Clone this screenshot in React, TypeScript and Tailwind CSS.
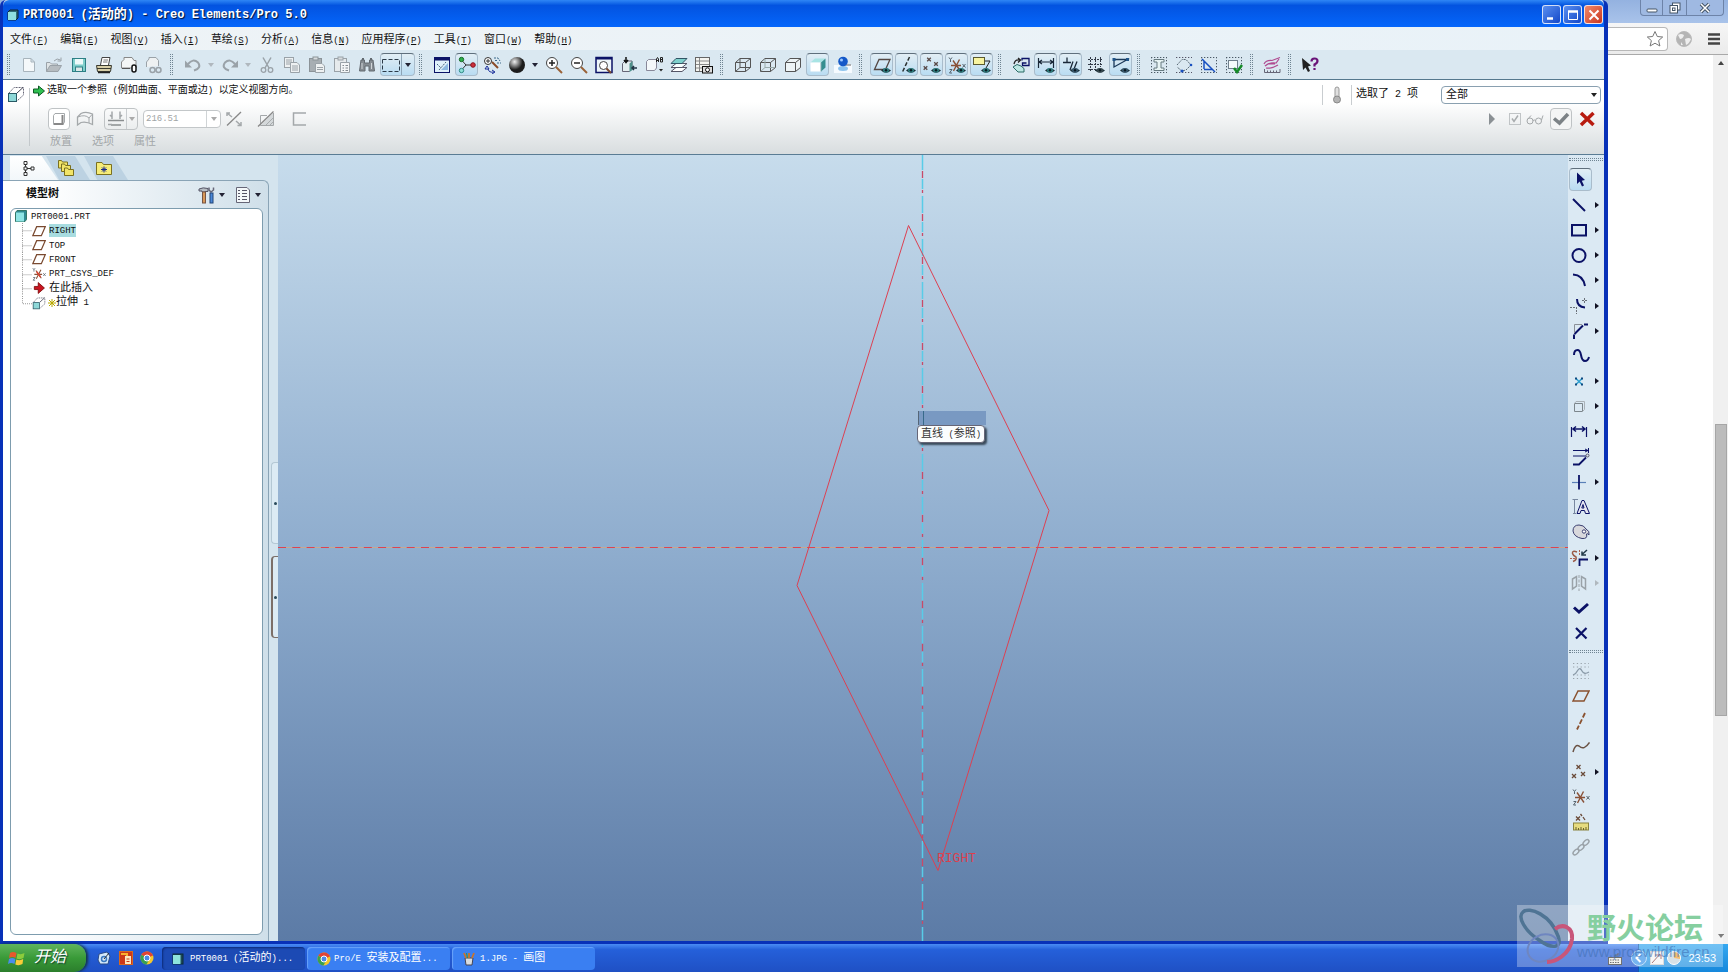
import React from "react";

type Kids = { children?: React.ReactNode };

const MONO = "font-['Liberation_Mono','Noto_Sans_CJK_SC',monospace]";

/* Sets Latin runs in a narrow monospace next to full-width Han glyphs. */
function T({ s, latin = "text-[9px]", u }: { s: string; latin?: string; u?: string }) {
  const parts = s.match(/[\x20-\x7e]+|[^\x20-\x7e]+/g) ?? [];
  return (
    <span className="whitespace-pre">
      {parts.map((p, i) =>
        /^[\x20-\x7e]/.test(p) ? (
          <span key={i} className={latin}>{p}</span>
        ) : (
          <span key={i}>{p}</span>
        )
      )}
      {u && (
        <span className={latin}>
          (<span className="underline underline-offset-1">{u}</span>)
        </span>
      )}
    </span>
  );
}

function Ic({ children, className = "size-[18px]", box = "0 0 18 18" }: Kids & { className?: string; box?: string }) {
  return (
    <svg viewBox={box} className={`${className} shrink-0`} fill="none" stroke="#333" strokeWidth="1" aria-hidden="true">
      {children}
    </svg>
  );
}

const Eye = ({ c = "#2f7f7f" }: { c?: string }) => (
  <g stroke="none">
    <path d="M8 14.5Q12.500 10 18 14.500Q13 19 8 14.500Z" fill="#1b2f38" />
    <ellipse cx="13" cy="14.300" rx="3" ry="2.300" fill={c} />
    <circle cx="13" cy="14.300" r="1.200" fill="#0a1a22" />
  </g>
);

const X = ({ x, y, r = 1.8, c = "#5a4a48" }: { x: number; y: number; r?: number; c?: string }) => (
  <path d={`M${x - r} ${y - r}L${x + r} ${y + r}M${x + r} ${y - r}L${x - r} ${y + r}`} stroke={c} strokeWidth="1.3" />
);

const Csys = () => (
  <>
    <path d="M3 9.500H13M5 4.500L12 14.500M11.500 3.500L5.500 15" stroke="#8a5238" strokeWidth="1.400" />
    <path d="M1 1.500L2.500 3.500L4 1.500M2.500 3.500V6M1.500 13.500H4L1.500 17H4M14.500 8L17.500 11.500M17.500 8L14.500 11.500" stroke="#56626c" />
  </>
);

const DotFrame = ({ c = "#4b5a66" }: { c?: string }) => (
  <path d="M1 1.500H17M1 16.500H17M1.500 1V17M16.500 1V17" stroke={c} strokeDasharray="1.300 1.700" />
);

const navy = "#0b1266";
const gray = "#9aa2a8";

const icons: Record<string, React.ReactNode> = {
  new: <path d="M3.500 2.500H11L14.500 6V15.500H3.500ZM11 2.500V6H14.500" fill="#f4f8fa" stroke="#a8b4bc" />,
  open: <><path d="M1.500 15.500V6.500H5L6.500 8H12.500V9.500" fill="#dfe4e6" stroke={gray} /><path d="M1.500 15.500L5 9.500H16.500L13 15.500Z" fill="#b6bcc0" stroke={gray} /><path d="M9 5Q12 1.500 15.500 4M16 1.500V5H12.500" stroke={gray} /></>,
  save: <><rect x="2.500" y="2.500" width="13" height="13" fill="#7fcfcb" stroke="#2e7f85" /><rect x="5" y="3" width="8" height="5.500" fill="#eefafa" stroke="none" /><rect x="5.500" y="11" width="7" height="4.500" fill="#dce8e8" stroke="#2e7f85" /></>,
  print: <><path d="M5.500 9L7 1.500H15L13.500 9" fill="#fff" stroke="#444" /><path d="M8.500 4H13M8 6H12.500" stroke="#777" /><path d="M1.500 9.500H16.500L15.500 15.500H2.500Z" fill="#d8cfa8" stroke="#3a3a30" /><path d="M2 12.500H16" stroke="#3a3a30" /><path d="M3 16.500H15" stroke="#222" strokeWidth="1.500" /></>,
  preview: <><path d="M1.500 12V6L4 3.500V1.500H12L14 4.500H16V12Z" fill="#f4f6f6" stroke="#888" /><path d="M2 12.500H10" stroke="#555" /><rect x="12" y="9" width="4" height="7" rx="2" fill="#fff" stroke="#111" strokeWidth="1.500" /></>,
  link: <><path d="M1.500 11V6L4 3V1.500H11L13.500 4.500V10" fill="#eef1f2" stroke={gray} /><circle cx="7.500" cy="14" r="2.500" stroke={gray} strokeWidth="1.500" /><circle cx="13.500" cy="14" r="2.500" stroke={gray} strokeWidth="1.500" /></>,
  undo: <><path d="M4 8Q9 2 14 6.500Q18 12 10 14.500" stroke={gray} strokeWidth="2" /><path d="M1 4.500V11.500H8Z" fill={gray} stroke="none" /></>,
  redo: <><path d="M14 8Q9 2 4 6.500Q0 12 8 14.500" stroke={gray} strokeWidth="2" /><path d="M17 4.500V11.500H10Z" fill={gray} stroke="none" /></>,
  cut: <><path d="M5 1.500L11 12M13 1.500L7 12" stroke={gray} strokeWidth="1.500" /><circle cx="5.500" cy="14" r="2.300" stroke={gray} strokeWidth="1.300" /><circle cx="12.500" cy="14" r="2.300" stroke={gray} strokeWidth="1.300" /></>,
  copy: <><rect x="1.500" y="1.500" width="9" height="10" fill="#eef1f2" stroke={gray} /><path d="M3 4H9M3 6H9M3 8H9" stroke={gray} /><path d="M7.500 6.500H14L16.500 9V16.500H7.500Z" fill="#eef1f2" stroke={gray} /><path d="M9 10H15M9 12H15M9 14H15" stroke={gray} /></>,
  paste: <><rect x="1.500" y="2.500" width="12" height="13" fill="#a7aeb3" stroke="#8b9398" /><rect x="5" y="1" width="5" height="3" fill="#d8dcde" stroke="#8b9398" /><path d="M7.500 7.500H14L16.500 10V16.500H7.500Z" fill="#eef1f2" stroke={gray} /><path d="M9 11.500H15M9 13.500H15" stroke={gray} /></>,
  pasteSpecial: <><rect x="1.500" y="2.500" width="12" height="13" fill="#e6eaec" stroke={gray} /><rect x="5" y="1" width="5" height="3" fill="#d8dcde" stroke={gray} /><path d="M7.500 6.500H16.500V16.500H7.500Z" fill="#f4f6f7" stroke={gray} /><path d="M9.500 9.500H11M12.500 9.500H15M9.500 12H11M12.500 12H15M9.500 14.500H11M12.500 14.500H15" stroke="#838a90" /></>,
  find: <><path d="M3 4L1.500 15H7V10H11V15H16.500L15 4H11.500V7H6.500V4Z" fill="#858c92" stroke="#636a70" /><path d="M4 3H6M12 3H14" strokeWidth="2" stroke="#636a70" /><path d="M4 7V13M13.500 7V13" stroke="#d0d5d8" /></>,
  marquee: <rect x="0.500" y="3.500" width="17" height="12" strokeDasharray="4 2" stroke="#2b3a48" />,
  repaint: <><rect x="1.500" y="1.500" width="15" height="15" fill="#dff0fa" stroke={navy} /><path d="M1 3H17" stroke={navy} strokeWidth="3" /><path d="M4 8L8 12M6 14L13 6" stroke="#48647c" strokeDasharray="2 1" /><path d="M8 14L15 7V14Z" fill="#8cb8e0" stroke="none" /></>,
  spin: <><path d="M3.500 4L8 9L3.500 14M8 9H15" stroke="#333" /><circle cx="3.500" cy="3.500" r="2.200" fill="#2fae4a" stroke="#176b28" /><circle cx="3.500" cy="14.500" r="2.200" fill="#8fe0d8" stroke="#2f8a86" /><circle cx="15" cy="9" r="2.300" fill="#cc2f3c" stroke="#8a1522" /></>,
  orient: <><circle cx="5" cy="5" r="3.500" fill="#fff" stroke="#333" /><path d="M3 5H7M5 3V7" stroke="#333" /><path d="M9 6L15 12" stroke="#8a4a28" strokeWidth="2" /><path d="M11 2H15L17 5M12 4.500H15M14 7H18" stroke="#3a6888" strokeDasharray="2 1" /><path d="M4 10L2 13H6ZM5 13Q6 17 11 16M9 14L12 16L9 18" stroke="#1b2f9a" /></>,
  sphere: <><defs><radialGradient id="ball" cx="35%" cy="30%"><stop offset="0" stopColor="#f0f0f0" /><stop offset=".5" stopColor="#888" /><stop offset="1" stopColor="#1c1c1c" /></radialGradient></defs><circle cx="9" cy="9" r="8" fill="url(#ball)" stroke="none" /></>,
  zoomIn: <><circle cx="7" cy="7" r="5.500" fill="#fff" stroke="#444" /><path d="M4 7H10M7 4V10" stroke="#222" strokeWidth="1.500" /><path d="M11 11L17 17" stroke="#9a6238" strokeWidth="2" /></>,
  zoomOut: <><circle cx="7" cy="7" r="5.500" fill="#fff" stroke="#444" /><path d="M4 7H10" stroke="#222" strokeWidth="1.500" /><path d="M11 11L17 17" stroke="#9a6238" strokeWidth="2" /></>,
  refit: <><rect x="1" y="1.500" width="16" height="15" fill="#eef6fa" stroke={navy} strokeWidth="1.500" /><path d="M1 2.500H17" stroke={navy} strokeWidth="2" /><circle cx="8.500" cy="9.500" r="4" fill="#fff" stroke="#444" /><path d="M11.500 12.500L16 17" stroke="#7a4a30" strokeWidth="2" /></>,
  reorient: <><path d="M2.500 7.500L5 5H12V13L9.500 15.500H2.500Z" fill="#e4eef0" stroke="#667" /><path d="M6 1V6M4 4L6 6.500L8 4" stroke="#111" strokeWidth="1.500" /><path d="M9.500 7.500L12.500 5V14L9.500 16Z" fill="#4f8f8a" stroke="none" /><path d="M17 12H12M14 10L12 12L14 14" stroke="#234" strokeWidth="1.500" /></>,
  saved: <><path d="M1.500 5.500L3.500 3.500H11.500V12L9.500 14.500H1.500Z" fill="#f4f8fa" stroke="#889" /><path d="M11.500 6V3L12.500 1.500L13.500 3V6M11.500 4.500H13.500M15.500 1.500V6H17.500V1.500ZM15.500 3.500H17.500" stroke="#222" /><path d="M14 13H18L16 15.500Z" fill="#222" stroke="none" /></>,
  layers: <><path d="M1 15.500L6 11.500H17L12 15.500Z" fill="#fff" stroke="#556" /><path d="M1 11.500L6 7.500H17L12 11.500Z" fill="#f8ffff" stroke="#556" /><path d="M1 7.500L6 2.500H17L12 7.500Z" fill="#7fd0cc" stroke="#356" /></>,
  viewMgr: <><rect x="0.500" y="1.500" width="14" height="14" fill="#f4f4f0" stroke="#666" /><path d="M1 5H14M1 8.500H14M1 12H14M4.500 2V15" stroke="#888" /><rect x="7.500" y="10.500" width="10" height="6.500" fill="#ddd" stroke="#111" /><circle cx="12.500" cy="13.800" r="2" fill="#fff" stroke="#111" /></>,
  wire: <path d="M1.500 6.500H11.500V15.500H1.500ZM6 2.500H16.500V11.500H6ZM1.500 6.500L6 2.500M11.500 6.500L16.500 2.500M11.500 15.500L16.500 11.500M1.500 15.500L6 11.500" stroke="#555" />,
  hidden: <><path d="M1.500 6.500H11.500V15.500H1.500ZM1.500 6.500L6 2.500H16.500V11.500L11.500 15.500M11.500 6.500L16.500 2.500" stroke="#555" /><path d="M6 3V11.500H16M6 11.500L2 15" stroke="#9aa" /></>,
  noHidden: <path d="M1.500 6.500H11.500V15.500H1.500ZM1.500 6.500L6 2.500H16.500V11.500L11.500 15.500M11.500 6.500L16.500 2.500" stroke="#555" fill="#eef4f6" />,
  shade: <><path d="M1.500 6.500L6 2.500H16.500L12 6.500Z" fill="#a8e4e4" stroke="none" /><path d="M1.500 6.500H12V15.500H1.500Z" fill="#fff" stroke="none" /><path d="M12 6.500L16.500 2.500V11.500L12 15.500Z" fill="#358f90" stroke="none" /><path d="M12 6.500V15.500" stroke="#80a8b0" /></>,
  realism: <><rect x="0" y="9" width="18" height="8" fill="#f6fbff" stroke="none" /><path d="M9 9H17" stroke="#999" strokeWidth="1.500" /><ellipse cx="9" cy="12.500" rx="5" ry="2.500" fill="#8ec4ee" stroke="none" /><circle cx="9" cy="5.500" r="4.800" fill="#1458c8" stroke="none" /><circle cx="7.500" cy="4" r="1.500" fill="#9cc8ff" stroke="none" /></>,
  planeEye: <><path d="M1.500 13.500L6 3.500H17L12.500 13.500Z" stroke="#544844" strokeWidth="1.300" /><Eye /></>,
  axisEye: <><path d="M11.500 1L4 17" stroke="#2a3030" strokeWidth="1.500" strokeDasharray="4 2" /><Eye /></>,
  pointEye: <><X x={6} y={3.500} /><X x={2.500} y={12} /><X x={13} y={8} /><Eye /></>,
  csysEye: <><Csys /><Eye /></>,
  noteEye: <><rect x="0.500" y="1.500" width="11" height="7" fill="#f8f4a0" stroke="#5a5a30" /><path d="M12 5H17L13 12" stroke="#222" /><Eye /></>,
  ref3d: <><path d="M10 4.500V2.500H17V9.500H10.500V7H14.500" stroke={navy} strokeWidth="1.300" /><path d="M2 8Q3 3 8 4M6 2L8.500 4L6 6.500" stroke="#222" strokeWidth="1.300" /><path d="M1 11L5 8.500L9 10L12 12.500V16H6L3 13Z" fill="#bfe8e4" stroke="#2a6a66" /></>,
  dimEye: <><path d="M1.500 2V12M16.500 2V12M2 6H16M5 4L2 6L5 8M13 4L16 6L13 8" stroke="#1a2838" strokeWidth="1.200" /><Eye /></>,
  constrEye: <><path d="M1 6.500H9M5 1.500V6.500M8 14L11 5.500M12 13L15 5.500" stroke="#1a2838" strokeWidth="1.300" /><Eye c="#3a5a70" /></>,
  gridEye: <><path d="M1 3.500H16M1 8.500H16M1 13.500H9M3.500 1V16M8.500 1V15M13.500 1V11" stroke="#333b48" strokeDasharray="2 1" /><Eye c="#3a4a50" /></>,
  vertEye: <><path d="M1.500 3.500H15.500L2 11V3.500" stroke="#1a3858" strokeWidth="1.300" /><rect x="0.500" y="2" width="3" height="3" fill="#258" stroke="none" /><rect x="14" y="2" width="3" height="3" fill="#258" stroke="none" /><Eye c="#3a5a70" /></>,
  dg1: <><DotFrame /><path d="M4 3.500H14V6H11V12H14V14.500H4V12H7V6H4Z" fill="#e8f4f4" stroke="#667a80" /></>,
  dg2: <><path d="M1 1.500H17M1 16.500H17" stroke="#556" strokeDasharray="1.300 1.700" /><path d="M2 9L7 3.500H11L16 9L11 14L7 15L2 11" stroke="#566672" strokeDasharray="2 1" /><circle cx="7" cy="15" r="1.600" fill="#1850c0" stroke="none" /><circle cx="16" cy="9" r="1.300" fill="#1850c0" stroke="none" /></>,
  dg3: <><DotFrame /><path d="M2 3L15 16M4 13V5M4 13.500H12" stroke="#1850c0" strokeWidth="1.500" /></>,
  dg4: <><DotFrame /><rect x="3.500" y="4.500" width="9" height="8" fill="#f6fbfb" stroke="#70808c" /><path d="M9 12L12 16L17 9" stroke="#158a28" strokeWidth="2.500" /></>,
  analysis: <><path d="M1 8Q3 4 9 4.500L17 1.500M2 10Q6 6 13 7L16 3M3 12Q8 13 15 9M5 8H12" stroke="#b04a90" strokeWidth="1.200" /><path d="M1.500 13V16.500H17V13M4.500 14.500V16M7.500 14.500V16M10.500 14.500V16M13.500 14.500V16" stroke="#667" /></>,
  help: <><path d="M1 2L2 14L4.500 11.500L7 16L9 15L7 10.500L10 9.500Z" fill="#222" stroke="none" /><path d="M10.500 5.500Q10.500 2.500 13.500 2.500Q16.500 2.500 16.500 5Q16.500 7 13.500 8.500V10.500M13.500 12V14" stroke="#6a1478" strokeWidth="2.200" /></>,
};

const side: Record<string, React.ReactNode> = {
  select: <path d="M5 1.500V13L7.700 10.500L10 15.500L12 14.500L9.800 9.800L13 9Z" fill={navy} stroke="none" />,
  line: <path d="M3 3L15 15" stroke={navy} strokeWidth="2" />,
  rect: <rect x="2" y="4" width="14" height="10.500" stroke={navy} strokeWidth="2" />,
  circle: <circle cx="9" cy="9.500" r="6.500" stroke={navy} strokeWidth="2" />,
  arc: <path d="M3 3.500Q13 4 15 15" stroke={navy} strokeWidth="2" />,
  fillet: <><path d="M7 2Q7 10 15 10.500" stroke={navy} strokeWidth="2" /><path d="M0 10.500H7M6.500 10V17M14.500 1V6M12 3.500H17" stroke="#6a7078" strokeDasharray="2 1" /></>,
  chamfer: <><path d="M4 17V12.500M4.500 12L13 3.500M14 2.500H18" stroke={navy} strokeWidth="2" /><path d="M4.500 11V2.500H12" stroke="#8a9098" /></>,
  spline: <path d="M2 8Q2 3 5.500 3Q8 3 9 8Q10 14 13 14Q16 14 17 10" stroke={navy} strokeWidth="2" />,
  point: <><path d="M6 6.500L12 12.500M12 6.500L6 12.500" stroke="#2fa0d0" strokeWidth="1.500" /><path d="M5 5.500h2v2h-2zM11 5.500h2v2h-2zM5 11.500h2v2h-2zM11 11.500h2v2h-2z" fill="#0f4a80" stroke="none" /></>,
  edge: <><path d="M4.500 6.500H12.500V14.500H4.500Z" stroke="#7c868c" /><path d="M4.500 6.500L6 4.500H14.500V12.500L12.500 14.500" stroke="#aab2b8" /></>,
  dim: <><path d="M1.500 4V14M16.500 4V14" stroke={navy} strokeWidth="1.200" /><path d="M3 6H15M6 3.500L3 6L6 8.500M12 3.500L15 6L12 8.500" stroke={navy} strokeWidth="1.500" /></>,
  modify: <><path d="M1 2.500H16M16.500 0V5M13 1L16 2.500L13 4" stroke={navy} /><path d="M1 8H14" stroke={navy} /><circle cx="15.500" cy="7.500" r="1.500" stroke="#556" /><path d="M1 16.500H7L14 9.500" stroke={navy} strokeWidth="1.800" /></>,
  constrain: <><path d="M2 9.500H16" stroke="#5a80b8" strokeWidth="1.200" /><path d="M9 2V16.500" stroke={navy} strokeWidth="1.800" /></>,
  text: <><path d="M5 15.500L10 2.500H12L17.500 15.500H13.500L12.500 12.500H9L8 15.500ZM9.800 10H12L11 6.500Z" fill="#e6e6f2" stroke={navy} /><path d="M2.500 2V15M0.500 1.500H6M1 15.500H4" stroke="#7888a0" /></>,
  palette: <><path d="M1 8Q1 2 7 2Q12 2 14 6Q18 8 17 12Q16 10 14.500 11Q16 16 10 15.500Q2 14 1 8Z" fill="#d8d8dc" stroke="#3a3f70" /><circle cx="12" cy="8.500" r="1.700" fill="#fff" stroke="#3a3f70" /></>,
  trim: <><path d="M7 3Q2 1 2.500 4.500Q3 6.500 6 8Q7 11 3 12.500" stroke="#9a5a48" strokeWidth="1.500" /><path d="M0 9.500H6M9.500 1V7" stroke="#b06050" strokeDasharray="2 1" /><path d="M9.500 17V10.500H18" stroke={navy} strokeWidth="1.800" /><path d="M17 1L12 5.500M12 2.500V6H16" stroke="#223a48" strokeWidth="1.500" /></>,
  mirror: <><path d="M2.500 5L6.500 2.500V12L2.500 15ZM15.500 5L11.500 2.500V12L15.500 15Z" stroke={gray} strokeWidth="1.500" /><path d="M9 1V17" stroke={gray} strokeDasharray="3 1.500" /></>,
  done: <path d="M2 8.500L7 13L16 5" stroke={navy} strokeWidth="3" />,
  quit: <path d="M4 4L14.500 14.500M14.500 4L4 14.500" stroke={navy} strokeWidth="2.200" />,
  sketchG: <><path d="M1 1.500H17M1 5H17M1 13H17M1 16.500H17" stroke="#9aa4ac" strokeDasharray="1.300 2.500" /><path d="M1 13Q4 12 6 8Q8 5 10 9Q12 13 17 10" stroke="#8a9aa8" strokeWidth="1.300" /></>,
  plane: <path d="M1 14L6 4H17L12 14Z" stroke="#8a5230" strokeWidth="1.500" />,
  axis: <path d="M13 1L5 17.500" stroke="#8a5230" strokeWidth="1.800" strokeDasharray="5 2" />,
  curve: <path d="M1 15Q3 7 7 9Q12 14 17.500 5.500" stroke="#6a5244" strokeWidth="1.500" />,
  points: <><X x={8.500} y={4} r={2} c="#6a4a38" /><X x={4} y={13} r={2} c="#6a4a38" /><X x={13} y={11} r={2} c="#6a4a38" /></>,
  csys: <Csys />,
  measure: <><X x={6} y={5.500} r={2} c="#6a4a38" /><path d="M8.500 1L10 3M11 4L13 7" stroke="#6a4a38" strokeWidth="1.300" /><rect x="1.500" y="10" width="15" height="7" fill="#e6dc80" stroke="#8a8440" /><path d="M4 17V14M6.500 17V15M9 17V14M11.500 17V15M14 17V14" stroke="#6a6430" /></>,
  chain: <><ellipse cx="4" cy="14" rx="3.500" ry="2" transform="rotate(-42 4 14)" stroke={gray} strokeWidth="1.500" /><ellipse cx="9" cy="9.500" rx="3.500" ry="2" transform="rotate(-42 9 9.500)" stroke={gray} strokeWidth="1.500" /><ellipse cx="14" cy="4.500" rx="3.500" ry="2" transform="rotate(-42 14 4.500)" stroke={gray} strokeWidth="1.500" /></>,
};

const Grip = ({ slim }: { slim?: boolean }) => (
  <div className={`${slim ? "w-[13px]" : "w-[14px]"} flex shrink-0 self-stretch py-1 pl-1`}>
    <div className="h-full w-[3px] border-x border-dotted border-[#6f8492]" />
  </div>
);
const HGrip = () => <div className="mr-[1px] ml-[1px] h-[3px] shrink-0 border-y border-dotted border-[#6f8492]" />;

const Caret = ({ c = "#223" }: { c?: string }) => (
  <svg viewBox="0 0 6 4" className="h-1 w-[6px]" aria-hidden="true"><path d="M0 0H6L3 4Z" fill={c} /></svg>
);

const PRESSED =
  "rounded-sm border border-[#a9bccb] border-t-[#5f6f7c] bg-linear-to-b from-[#e2eef5] to-[#b9dcf2]";

function Tool({ n, on }: { n: string; on?: boolean }) {
  return (
    <div className="flex w-[25px] shrink-0 justify-center">
      <button aria-label={n} className={`flex size-[23px] items-center justify-center ${on ? PRESSED : ""}`}>
        <Ic>{icons[n]}</Ic>
      </button>
    </div>
  );
}

function Drop({ c, label }: { c?: string; label: string }) {
  return (
    <button aria-label={label} className="flex h-full w-3 shrink-0 items-center justify-center"><Caret c={c} /></button>
  );
}

function SideTool({ n, more, on }: { n: string; more?: string; on?: boolean }) {
  return (
    <div className="flex flex-1 items-center">
      <button aria-label={n} className={`flex size-[23px] items-center justify-center ${on ? PRESSED : ""}`}>
        <Ic>{side[n]}</Ic>
      </button>
      {more && (
        <button aria-label={`${n} +`} className="flex w-4 items-center justify-center">
          <svg viewBox="0 0 4 6" className="h-[6px] w-1" aria-hidden="true"><path d="M0 0L4 3L0 6Z" fill={more} /></svg>
        </button>
      )}
    </div>
  );
}

function TitleBar() {
  const btn = "flex size-[19px] items-center justify-center rounded-[3px] border border-white/80";
  return (
    <header className="flex h-[27px] shrink-0 items-center rounded-t-md bg-linear-to-b from-[#2f86f5] via-[#0353e0] via-20% to-[#0566fb] pt-[2px] pr-[1px] pl-1">
      <Ic className="size-3" box="0 0 12 12">
        <path d="M1 3L3 1H11V9L9 11H1Z" fill="#2f6f78" stroke="#123" />
        <rect x="1" y="3" width="8" height="8" fill="#8fe0e0" stroke="none" />
      </Ic>
      <h1 className="flex-1 pl-1 text-[13px] leading-none font-bold text-white [text-shadow:1px_1px_1px_#013]">
        <T s="PRT0001 (活动的) - Creo Elements/Pro 5.0" latin="text-[12px]" />
      </h1>
      <div className="flex gap-[2px]">
        <button aria-label="最小化" className={`${btn} bg-linear-to-br from-[#5b8ff0] to-[#1446c8]`}>
          <Ic className="size-3" box="0 0 12 12"><path d="M1 9.500H7" stroke="#fff" strokeWidth="2.500" /></Ic>
        </button>
        <button aria-label="最大化" className={`${btn} bg-linear-to-br from-[#5b8ff0] to-[#1446c8]`}>
          <Ic className="size-3" box="0 0 12 12"><path d="M1.500 2V10.500H10.500V2" stroke="#fff" /><path d="M1 2.500H11" stroke="#fff" strokeWidth="2.500" /></Ic>
        </button>
        <button aria-label="关闭" className={`${btn} bg-linear-to-br from-[#f0886a] to-[#c8321a]`}>
          <Ic className="size-3" box="0 0 12 12"><path d="M1.500 1.500L10.500 10.500M10.500 1.500L1.500 10.500" stroke="#fff" strokeWidth="2" /></Ic>
        </button>
      </div>
    </header>
  );
}

const MENUS = [["文件", "F"], ["编辑", "E"], ["视图", "V"], ["插入", "I"], ["草绘", "S"], ["分析", "A"], ["信息", "N"], ["应用程序", "P"], ["工具", "T"], ["窗口", "W"], ["帮助", "H"]];

function Toolbar() {
  return (
    <div className="flex h-[30px] shrink-0 items-center overflow-hidden border-b border-[#55788e] bg-[#dae8f1]">
      <Grip slim />
      {["new", "open", "save", "print", "preview", "link"].map((n) => <Tool key={n} n={n} />)}
      <Grip />
      <Tool n="undo" /><Drop c="#b0b8be" label="撤销列表" /><Tool n="redo" /><Drop c="#b0b8be" label="重做列表" />
      {["cut", "copy", "paste", "pasteSpecial", "find"].map((n) => <Tool key={n} n={n} />)}
      <div className="flex w-9 shrink-0 justify-center">
        <div className={`flex h-[23px] w-[35px] ${PRESSED}`}>
          <button aria-label="框选" className="flex flex-1 items-center justify-center border-r border-[#8ca4b6]"><Ic>{icons.marquee}</Ic></button>
          <Drop label="框选列表" />
        </div>
      </div>
      <Grip />
      <Tool n="repaint" /><Tool n="spin" on /><Tool n="orient" /><Tool n="sphere" /><Drop label="外观列表" />
      {["zoomIn", "zoomOut", "refit", "reorient", "saved", "layers", "viewMgr"].map((n) => <Tool key={n} n={n} />)}
      <Grip />
      <Tool n="wire" /><Tool n="hidden" /><Tool n="noHidden" /><Tool n="shade" on /><Tool n="realism" />
      <Grip />
      {["planeEye", "axisEye", "pointEye", "csysEye", "noteEye"].map((n) => <Tool key={n} n={n} on />)}
      <Grip />
      <Tool n="ref3d" /><Tool n="dimEye" on /><Tool n="constrEye" on /><Tool n="gridEye" /><Tool n="vertEye" on />
      <Grip slim />
      {["dg1", "dg2", "dg3", "dg4"].map((n) => <Tool key={n} n={n} />)}
      <Grip slim />
      <Tool n="analysis" />
      <Grip slim />
      <Tool n="help" />
    </div>
  );
}

const Extrude = ({ className = "size-[18px]" }: { className?: string }) => (
  <Ic className={className}>
    <path d="M2 8L7 2.500H16.500V10L10 16" stroke="#667" strokeDasharray="2 1" />
    <path d="M10 8L16 2.500" stroke="#445" />
    <rect x="1.500" y="8.500" width="8" height="8" fill="#8ed8d8" stroke="#2a5a66" />
  </Ic>
);

function Dashboard() {
  const g = "#a4a8aa";
  const box = "flex h-[22px] items-center justify-center rounded-sm border border-[#bfc3c5]";
  return (
    <section className="flex h-[75px] shrink-0 border-b border-[#5a7c94] bg-linear-to-b from-white from-30% to-[#d8dddf]">
      <div className="w-[26px] shrink-0 pt-[5px] pl-1"><Extrude /></div>
      <div className="mt-2 mb-2 w-px bg-[#c3c8cb]" />
      <div className="flex-1">
        <div className="flex h-[27px]">
          <div className="flex h-[22px] flex-1 items-center gap-[2px] pl-[3px] text-[10px] leading-none">
            <Ic className="size-3" box="0 0 12 12"><path d="M0.500 4H5.500V1L11.500 6L5.500 11V8H0.500Z" fill="#2fc050" stroke="#0d5a24" /></Ic>
            <T s="选取一个参照 (例如曲面、平面或边) 以定义视图方向。" />
          </div>
          <div className="flex items-center pt-[2px] pr-[3px] text-[11px]">
            <div className="h-5 w-px bg-[#c9cdd0]" />
            <Ic className="mx-[5px] size-[18px]"><rect x="7" y="1" width="4" height="11" rx="2" fill="#e0e0e0" stroke="#999" /><circle cx="9" cy="13.500" r="3.500" fill="#b4b4b4" stroke="#888" /></Ic>
            <div className="h-5 w-px bg-[#c9cdd0]" />
            <label htmlFor="filter" className="w-[89px] pl-1"><T s="选取了 2 项" latin="text-[10px]" /></label>
            <div className="relative w-40">
              <select id="filter" className="block h-[18px] w-full appearance-none rounded-sm border border-[#8aa0b0] bg-white pl-1 text-[11px] leading-4">
                <option>全部</option>
              </select>
              <span className="pointer-events-none absolute top-1/2 right-1 flex -translate-y-1/2"><Caret c="#222" /></span>
            </div>
          </div>
        </div>
        <div className="flex h-6 items-center pr-2">
          <button aria-label="实体" className={`${box} ml-[18px] w-[22px] bg-white`}><Ic><path d="M3.500 5.500L5 3.500H14.500V12L13 14.500H3.500Z" stroke={g} /><path d="M4 14H12.500V5" stroke="#888" strokeWidth="2" /></Ic></button>
          <button aria-label="曲面" className="ml-[6px]"><Ic><path d="M1.500 15V7L5 3.500Q10 1 16.500 4V14.500Q10 11 5 12.500Z" stroke={g} strokeWidth="1.300" /><path d="M2 7Q9 4 13 8V13M13 8L16 4.500" stroke={g} /></Ic></button>
          <div className={`${box} ml-[10px] w-[34px]`}>
            <button aria-label="深度" className="flex h-full flex-1 items-center justify-center border-r border-[#c9cdd0]"><Ic><path d="M1 10.500H17M4 15H14" stroke="#8a8e90" strokeWidth="1.500" /><path d="M5 1.500V9M13 1.500V9M1 14.500H5M5 7L3 5M13 7L15 5" stroke={g} strokeWidth="1.500" /></Ic></button>
            <button aria-label="深度列表" className="flex h-full w-[10px] items-center justify-center"><Caret c="#aaa" /></button>
          </div>
          <div className="ml-[5px] flex h-[18px] w-[78px] items-center rounded-sm border border-[#c3c7c9] bg-white">
            <input aria-label="深度值" defaultValue="216.51" className="h-full w-0 flex-1 bg-transparent pl-[2px] text-[9px] text-[#a0a4a6] outline-none" />
            <button aria-label="值列表" className="flex h-full w-[14px] items-center justify-center border-l border-[#d0d4d6]"><Caret c="#aaa" /></button>
          </div>
          <button aria-label="反向" className="ml-1"><Ic><path d="M2 15.500L16 2" stroke="#888" strokeWidth="1.300" /><path d="M2 3L7 7M2 6V3H5M11 11L16 15.500M16 12V15.500H12.500" stroke={g} strokeWidth="1.500" /></Ic></button>
          <button aria-label="移除材料" className="ml-[14px]"><Ic><path d="M3.500 15.500V5.500H10M3.500 15.500H16.500V3" stroke={g} /><path d="M4 15L16 3V15Z" fill="#d4d8da" stroke="none" /><path d="M1 16.500L16.500 1.500" stroke="#888" strokeWidth="1.300" /><path d="M9 15L16 8M13 15L16 12" stroke="#a8acae" /></Ic></button>
          <button aria-label="加厚" className="ml-[15px]"><Ic><path d="M16 3H3.500V15H16" stroke={g} strokeWidth="1.500" /></Ic></button>
          <div className="flex-1" />
          <button aria-label="继续" className="mr-[11px]"><Ic className="size-3" box="0 0 12 12"><path d="M3 0L9 6L3 12Z" fill="#8a9094" stroke="none" /></Ic></button>
          <button aria-label="预览" className="flex items-center gap-[5px]">
            <Ic className="size-3" box="0 0 12 12"><rect x="0.500" y="0.500" width="11" height="11" stroke="#c0c4c6" /><path d="M3 5.500L5 8.500L9 2.500" stroke="#a8acae" strokeWidth="1.500" /></Ic>
            <Ic><circle cx="4" cy="11" r="3" stroke={g} /><circle cx="12.500" cy="11" r="3" stroke={g} /><path d="M1 10L5 5.500M15.500 10L17 5.500M7 10.500Q8.500 9.500 9.500 10.500" stroke={g} /></Ic>
          </button>
          <button aria-label="确定" className={`${box} ml-[6px] w-[22px] bg-[#f4f5f5]`}><Ic><path d="M2 8.500L7.500 13L16 4" stroke="#7c8286" strokeWidth="3.500" /></Ic></button>
          <button aria-label="取消" className="ml-[6px]"><Ic><path d="M3 3L15.500 15M15.500 3L3 15" stroke="#b81c10" strokeWidth="3.500" /></Ic></button>
        </div>
        <div className="flex gap-5 pt-1 pl-5 text-[11px] leading-[14px] text-[#a3a7a9]">
          <button>放置</button><button>选项</button><button>属性</button>
        </div>
      </div>
    </section>
  );
}

const PlaneS = () => <Ic className="size-[14px]"><path d="M1 15L6 3.500H17L12 15Z" stroke="#7a4a30" strokeWidth="1.600" /></Ic>;

const TREE: { label: string; icon: React.ReactNode; sel?: boolean; star?: boolean }[] = [
  { label: "RIGHT", icon: <PlaneS />, sel: true },
  { label: "TOP", icon: <PlaneS /> },
  { label: "FRONT", icon: <PlaneS /> },
  { label: "PRT_CSYS_DEF", icon: <Ic className="size-[14px]"><Csys /><path d="M6 6L11 13" stroke="#e04030" strokeWidth="2" /></Ic> },
  { label: "在此插入", icon: <Ic className="size-[14px]"><path d="M3 7H8V2L16 9L8 16V11H3Z" fill="#c81420" stroke="#700" /></Ic> },
  { label: "拉伸 1", icon: <Extrude className="size-[14px]" />, star: true },
];

const Folder = ({ x, y }: { x: number; y: number }) => (
  <path d={`M${x} ${y}h3l1 1.500h5v6h-9z`} fill="#f2e468" stroke="#7a7020" />
);

function LeftPanel() {
  return (
    <aside className="flex w-[275px] shrink-0 bg-[#d4e4ee]">
      <div className="flex min-w-0 flex-1 flex-col">
        <nav className="flex h-[25px] shrink-0 items-end pl-[7px]">
          <button aria-label="模型树" className="flex h-6 w-12 items-center bg-linear-to-b from-white to-[#f2f7fa] pl-3 [clip-path:polygon(0_0,66%_0,100%_100%,0_100%)]">
            <Ic><path d="M2 2.500H5V5.500H2ZM2 8H5V11H2ZM2 13.500H5V16.500H2ZM9 8H12V11H9ZM3.500 5.500V8M3.500 11V13.500M5 9.500H9" stroke="#333" /></Ic>
          </button>
          <button aria-label="文件夹浏览器" className="-ml-3 flex h-6 w-11 items-center bg-[#bcd2e2] pl-[11px] [clip-path:polygon(0_0,66%_0,100%_100%,30%_100%)]">
            <Ic><Folder x={1.500} y={1.500} /><Folder x={4.500} y={5} /><Folder x={7.500} y={9} /></Ic>
          </button>
          <button aria-label="收藏夹" className="-ml-[6px] flex h-6 w-11 items-center bg-[#bcd2e2] pl-[11px] [clip-path:polygon(0_0,66%_0,100%_100%,30%_100%)]">
            <Ic><path d="M1.500 3.500H7L8.500 5.500H16.500V15.500H1.500Z" fill="#f6ec78" stroke="#7a7020" /><path d="M9 7.500V13.500M6 10.500H12M7 8.500L11 12.500M11 8.500L7 12.500" stroke="#1a2a8a" /></Ic>
          </button>
        </nav>
        <div className="flex flex-1 flex-col rounded-tr-md border-t border-r border-[#8aa4b6] bg-linear-to-r from-white from-15% to-[#cfdfe9] pr-[5px] pb-[6px] pl-[7px]">
          <div className="flex h-[27px] shrink-0 items-center pr-[2px] pl-4">
            <h2 className="flex-1 text-[11px] font-bold">模型树</h2>
            <button aria-label="设置" className="flex items-center gap-[3px]">
              <Ic><path d="M1 3Q5 1 10 2.500V5.500H7V6H4V5H1Z" fill="#b8bec4" stroke="#556" /><rect x="4.500" y="6" width="3" height="11" fill="#d89858" stroke="#754" /><path d="M11 1.500V4L13 6L15.500 4V1.500" stroke="#667" strokeWidth="1.500" /><rect x="12" y="7" width="3" height="10" fill="#4a88d8" stroke="#247" /></Ic>
              <Caret />
            </button>
            <button aria-label="显示" className="ml-[9px] flex items-center gap-[3px]">
              <Ic><path d="M2.500 1.500H13L15.500 4V16.500H2.500Z" fill="#f4f8fa" stroke="#667" /><path d="M4 4.500H6M8 4.500H13M4 7.500H6M8 7.500H13M4 10.500H6M8 10.500H13M4 13.500H6M8 13.500H13" stroke="#556" /></Ic>
              <Caret />
            </button>
          </div>
          <div className="flex-1 rounded-md border border-[#7d9cae] bg-white">
            <ul className="grid h-[101px] grid-rows-7 pl-1 text-[11px] leading-none text-[#111]">
              <li className="flex items-center gap-[4px]">
                <Ic className="size-3" box="0 0 12 12"><path d="M0.500 2.500L2 0.500H11.500V9.500L10 11.500H0.500Z" fill="#2f8a92" stroke="#376" /><rect x="1" y="2.500" width="8" height="9" fill="#8ee4e4" stroke="none" /></Ic>
                <T s="PRT0001.PRT" />
              </li>
              {TREE.map((r, i) => (
                <li key={r.label} className="flex items-center pl-[7px]">
                  <svg viewBox="0 0 10 14" className="h-full w-[10px]" preserveAspectRatio="none" stroke="#9a9a9a" strokeDasharray="1 1" fill="none" aria-hidden="true">
                    <path d={i === 5 ? "M0.500 0V7.500H10" : "M0.500 0V14M0.500 7.500H10"} />
                  </svg>
                  {r.icon}
                  {r.star && <Ic className="ml-[2px] size-2" box="0 0 8 8"><path d="M0 4H8M1 1L7 7M7 1L1 7M4 0V8" stroke="#b8a800" /></Ic>}
                  <span className={r.star ? "" : r.sel ? "ml-[3px] flex h-[13px] items-center bg-[#a8dce0]" : "ml-[3px]"}><T s={r.label} /></span>
                </li>
              ))}
            </ul>
          </div>
        </div>
      </div>
      <div className="flex w-[9px] shrink-0 flex-col items-end justify-center gap-3 pt-1">
        {["border-[#b4c8d4]", "border-[#7c6f68] border-l-2"].map((c) => (
          <button key={c} aria-label="面板滑块" className={`flex h-[82px] w-[7px] items-center justify-center rounded-l-sm border border-r-0 bg-[#dcebf4] ${c}`}>
            <span className="size-[3px] rounded-full bg-[#2a4a5a]" />
          </button>
        ))}
      </div>
    </aside>
  );
}

function Canvas() {
  return (
    <main className="relative min-w-0 flex-1 overflow-hidden bg-linear-to-b from-[#c7dcec] via-[#8fadce] to-[#5c7ba6]">
      <svg viewBox="0 0 1290 786" preserveAspectRatio="xMidYMid slice" className="absolute inset-0 size-full" fill="none" aria-hidden="true">
        <path d="M0 392.500H1290" stroke="#c8a890" />
        <path d="M0 392.500H1290" stroke="#dc4450" strokeDasharray="8 6.300" />
        <path d="M644.500 0V786" stroke="#58cce8" strokeWidth="1.500" strokeDasharray="10 7 17 9" strokeDashoffset="19" />
        <path d="M644.500 0V786" stroke="#c84a68" strokeWidth="1.300" strokeDasharray="7 12 3 21" strokeDashoffset="27" />
        <path d="M630.500 70.500L771 355.500L660 715.500L519 430.500Z" stroke="#dc4052" />
        <text x="659" y="707" fill="#dc3f4c" fontSize="13" fontFamily="Liberation Mono, monospace">RIGHT</text>
      </svg>
      <div className="absolute top-[256px] left-[640px] h-[14px] w-[68px] border-l border-[#567] bg-[#7999c2]"><div className="ml-1 h-full w-px bg-[#386a8a]" /></div>
      <div role="tooltip" className="absolute top-[270px] left-[639px] flex h-[18px] items-center rounded-sm border border-[#667] bg-[#fbfdfe] px-[3px] text-[11px] leading-none text-[#333] shadow-[2px_2px_2px_#3a4a5a]">
        <T s="直线 (参照)" />
      </div>
    </main>
  );
}

const SIDE1: [string, string?][] = [["select"], ["line", "#112"], ["rect", "#112"], ["circle", "#112"], ["arc", "#112"], ["fillet", "#112"], ["chamfer", "#112"], ["spline"], ["point", "#112"], ["edge", "#112"], ["dim", "#112"], ["modify"], ["constrain", "#112"], ["text"], ["palette"], ["trim", "#112"], ["mirror", "#b0b8be"], ["done"], ["quit"]];
const SIDE2: [string, string?][] = [["sketchG"], ["plane"], ["axis"], ["curve"], ["points", "#112"], ["csys"], ["measure"], ["chain"]];

function RightBar() {
  return (
    <aside className="flex w-9 shrink-0 flex-col bg-[#dbe9f3] pt-[3px]">
      <HGrip />
      <div className="mt-[6px] ml-[1px] flex h-[479px] shrink-0 flex-col">
        {SIDE1.map(([n, m]) => <SideTool key={n} n={n} more={m} on={n === "select"} />)}
      </div>
      <div className="mt-1 mb-[5px]"><HGrip /></div>
      <div className="ml-[1px] flex h-[202px] shrink-0 flex-col">
        {SIDE2.map(([n, m]) => <SideTool key={n} n={n} more={m} />)}
      </div>
    </aside>
  );
}

function BrowserBehind() {
  return (
    <div className="flex w-[120px] shrink-0 flex-col bg-white">
      <div className="flex h-[23px] justify-end bg-linear-to-b from-[#94b2e0] to-[#a9c3ea] pr-1">
        <div className="flex h-4 w-[84px] rounded-b-sm border border-t-0 border-[#6d83a8] bg-[#9fb9e2]">
          <button aria-label="最小化" className="flex w-[22px] items-center justify-center border-r border-[#6d83a8]"><Ic className="size-3" box="0 0 12 12"><rect x="1" y="7" width="10" height="3" rx="1" fill="#fff" stroke="#456" /></Ic></button>
          <button aria-label="还原" className="flex w-6 items-center justify-center border-r border-[#6d83a8]"><Ic className="size-3" box="0 0 12 12"><rect x="3.500" y="1" width="7.500" height="7" fill="#fff" stroke="#456" /><rect x="1" y="3.500" width="7.500" height="7.500" fill="#fff" stroke="#456" /><rect x="3.500" y="6" width="2.500" height="2.500" stroke="#456" /></Ic></button>
          <button aria-label="关闭" className="flex flex-1 items-center justify-center"><Ic className="size-3" box="0 0 12 12"><path d="M2 2L10 10M10 2L2 10" stroke="#456" strokeWidth="3.500" /><path d="M2 2L10 10M10 2L2 10" stroke="#fff" strokeWidth="1.500" /></Ic></button>
        </div>
      </div>
      <div className="flex h-8 items-center border-b border-[#a9a9a9] bg-linear-to-b from-[#f6f6f6] to-[#ebebeb] pr-2">
        <div className="flex h-6 w-[60px] items-center justify-end rounded-r-sm border border-l-0 border-[#b8b8b8] bg-white pr-[3px]">
          <Ic><path d="M9 1.500L11.300 6.500L16.700 7L12.600 10.600L13.900 16L9 13.200L4.100 16L5.400 10.600L1.300 7L6.700 6.500Z" stroke="#777" /></Ic>
        </div>
        <Ic className="ml-[7px] size-[18px]"><circle cx="9" cy="9" r="7.500" fill="#b4b4b4" stroke="#bbb" /><path d="M3 5Q6 3 9 5Q8 9 5 9ZM10 9Q14 7 16 9Q14 14 11 15ZM6 12L8 15H6Z" fill="#eee" stroke="none" /></Ic>
        <Ic className="ml-auto size-3" box="0 0 12 12"><path d="M0 1.500H12M0 6H12M0 10.500H12" stroke="#444" strokeWidth="2.500" /></Ic>
      </div>
      <div className="flex flex-1 justify-end">
        <div className="flex w-[15px] flex-col items-center bg-[#f0f0f0] py-[6px]">
          <svg viewBox="0 0 6 4" className="h-1 w-[6px]" aria-hidden="true"><path d="M0 4H6L3 0Z" fill="#444" /></svg>
          <div className="grow-[360]" />
          <div className="w-3 grow-[290] border border-[#a6a6a6] bg-[#bcbcbc]" />
          <div className="grow-[219]" />
          <Caret c="#444" />
        </div>
      </div>
    </div>
  );
}

const Chrome = () => (
  <Ic className="size-[14px]" box="0 0 14 14">
    <circle cx="7" cy="7" r="6.500" fill="#f4c82c" stroke="none" />
    <path d="M7 7L1.400 3.700A6.500 6.500 0 0 1 13 4.500Z" fill="#e04434" stroke="none" />
    <path d="M7 7L1.400 3.700A6.500 6.500 0 0 0 6.500 13.500L9 9Z" fill="#3aa050" stroke="none" />
    <circle cx="7" cy="7" r="3" fill="#4a8ae8" stroke="#fff" />
  </Ic>
);

function Taskbar() {
  const task = "flex h-[23px] w-[143px] items-center rounded-sm pt-[1px] pl-[10px] text-[11px] leading-none text-white";
  return (
    <footer className="flex h-7 shrink-0 items-center bg-linear-to-b from-[#4b8cf4] via-[#2560da] via-20% to-[#1f50c4]">
      <button className="flex h-7 w-[86px] items-center gap-2 rounded-r-xl bg-linear-to-b from-[#5fb55c] via-[#399a38] to-[#2b7e2c] pl-2 text-[16px] leading-none text-white italic shadow-[2px_0_3px_#134]">
        <Ic>
          <path d="M2 4Q5 2 8.500 4L7.500 9Q4.500 7 1 9Z" fill="#e8582c" stroke="none" />
          <path d="M9.500 4.500Q13 6 16.500 4L15.500 9Q12 11 8.500 9.500Z" fill="#8ccc3c" stroke="none" />
          <path d="M1 10Q4 8 7.300 10L6.500 15Q3 13 0 15Z" fill="#4a8cec" stroke="none" />
          <path d="M8.300 10.500Q12 12 15.200 10L14.500 15Q11 17 7.300 15.500Z" fill="#f8cc38" stroke="none" />
        </Ic>
        <span className="[text-shadow:1px_1px_1px_#143]">开始</span>
      </button>
      <div className="flex w-[76px] items-center justify-between pr-2 pl-[11px]">
        <button aria-label="显示桌面"><Ic className="size-[14px]" box="0 0 14 14"><path d="M2 3L10 1L13 5L11 13H3L1 9Z" fill="#d4e8fa" stroke="#2a4a88" /><circle cx="7" cy="8" r="2.500" stroke="#3a78c0" strokeWidth="1.500" /><path d="M7 8L12 2" stroke="#333" /></Ic></button>
        <button aria-label="演示"><Ic className="size-[14px]" box="0 0 14 14"><rect x="0.500" y="0.500" width="13" height="13" fill="#cc3818" stroke="#d86820" /><path d="M2 3H8V6" stroke="#f8b030" strokeWidth="2" /><path d="M6 5H12V13H6Z" fill="#fbe8c0" stroke="none" /><path d="M7.500 8H10.500M7.500 10.500H10.500" stroke="#cc3818" /></Ic></button>
        <button aria-label="Chrome"><Chrome /></button>
      </div>
      <div className="flex gap-[2px]">
        <button className={`${task} gap-[6px] bg-[#1c4ab4] shadow-[inset_1px_1px_2px_#0c2a78]`}>
          <Ic className="size-3" box="0 0 12 12"><rect x="1" y="1" width="10" height="10" fill="#1d4a58" stroke="#0a2a38" /><rect x="1" y="2" width="7.500" height="9" fill="#8ee4dc" stroke="none" /></Ic>
          <T s="PRT0001 (活动的)..." />
        </button>
        <button className={`${task} gap-[3px] bg-[#3a7ff2] shadow-[inset_1px_1px_1px_#6aa4fa]`}><Chrome /><T s="Pro/E 安装及配置..." /></button>
        <button className={`${task} gap-1 bg-[#3a7ff2] shadow-[inset_1px_1px_1px_#6aa4fa]`}>
          <Ic className="size-[14px]" box="0 0 14 14"><path d="M3 6H11L10 13H4Z" fill="#d8dce0" stroke="#445" /><path d="M4 6L2 1M7 6V1M10 6L12 1" stroke="#c8742c" strokeWidth="1.800" /><path d="M5.500 6L4.500 1" stroke="#2c9a4c" /></Ic>
          <T s="1.JPG - 画图" />
        </button>
      </div>
      <div className="flex-1" />
      <button aria-label="键盘" className="mr-4"><Ic className="size-[14px]" box="0 0 14 14"><rect x="0.500" y="6.500" width="13" height="7" fill="#e8e8e0" stroke="#333" /><path d="M2 9H12M2 11.500H12" stroke="#333" strokeDasharray="1.500 1" /><path d="M7 6V4H10V2" stroke="#333" /></Ic></button>
      <div className="flex h-full items-center gap-[3px] border-l border-[#0f5ab0] bg-linear-to-b from-[#35a8f0] to-[#1688dc] pr-3 text-[11px] text-white">
        <button aria-label="展开" className="-ml-2"><Ic className="size-4" box="0 0 16 16"><circle cx="8" cy="8" r="7.500" fill="#3c94e8" stroke="#a8d4f8" /><path d="M9.500 4L5.500 8L9.500 12" stroke="#fff" strokeWidth="2" /></Ic></button>
        <Ic className="size-[14px]" box="0 0 14 14"><rect x="0.500" y="0.500" width="13" height="13" fill="#f4f4f4" stroke="#ccc" /><path d="M2 12L10 3M5 4H11V8" stroke="#844" /></Ic>
        <Ic className="size-[14px]" box="0 0 14 14"><circle cx="7" cy="7" r="6.500" fill="#c8d4dc" stroke="#fff" /><path d="M7 7V1A6 6 0 0 1 13 8Z" fill="#f0a030" stroke="none" /></Ic>
        <time className="relative z-10 pl-1 font-['Liberation_Sans',sans-serif]">23:53</time>
      </div>
    </footer>
  );
}

function Watermark() {
  return (
    <div className="pointer-events-none absolute right-[5px] bottom-[5px] flex h-[62px] w-[206px] overflow-hidden bg-white/30">
      <svg viewBox="0 0 60 62" className="h-[62px] w-[60px] shrink-0" fill="none" aria-hidden="true">
        <path d="M41 31C46 44 34 44 22 35C8 26 0 12 6 7C12 1 34 10 41 31Z" stroke="#4f7494" strokeWidth="3.500" />
        <ellipse cx="26" cy="43" rx="16" ry="13" transform="rotate(-28 26 43)" stroke="#6f86c0" strokeWidth="2" />
        <path d="M38 24C46 18 56 22 55 34C53 50 38 57 30 57" stroke="#c8567a" strokeWidth="4" />
      </svg>
      <div className="flex flex-col items-start pt-1">
        <span className="pl-[10px] text-[29px] leading-[34px] font-bold text-[#86cfa0] font-['Noto_Sans_CJK_SC',sans-serif]">野火论坛</span>
        <span className="text-[15px] leading-[18px] text-[#3f6fb4]/60 font-['Liberation_Sans',sans-serif]">www.proewildfire.cn</span>
      </div>
    </div>
  );
}

export default function App() {
  return (
    <div className={`relative flex h-screen flex-col overflow-hidden bg-[#94b2e0] text-[#111] ${MONO}`}>
      <div className="flex min-h-0 flex-1">
        <div className="flex min-w-0 flex-1 flex-col rounded-t-md border-r-4 border-b-3 border-l-3 border-[#0831b8] bg-[#d4e4ee]">
          <TitleBar />
          <nav className="flex h-[23px] shrink-0 items-center gap-3 bg-linear-to-r from-[#eef3f6] to-[#e9f2f8] pt-1 pl-[7px] text-[11px] leading-none">
            {MENUS.map(([m, k]) => <button key={m}><T s={m} u={k} /></button>)}
          </nav>
          <Toolbar />
          <Dashboard />
          <div className="flex min-h-0 flex-1">
            <LeftPanel />
            <Canvas />
            <RightBar />
          </div>
        </div>
        <BrowserBehind />
      </div>
      <Taskbar />
      <Watermark />
    </div>
  );
}
